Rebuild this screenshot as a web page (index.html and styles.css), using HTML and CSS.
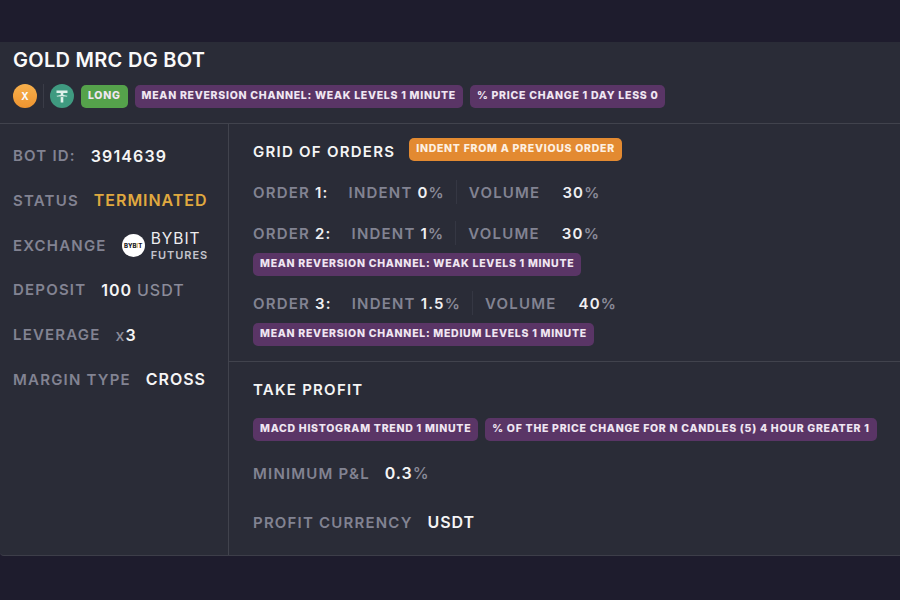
FILE: index.html
```html
<!DOCTYPE html>
<html lang="en">
  <head>
    <meta charset="UTF-8" />
    <meta name="viewport" content="width=device-width, initial-scale=1.0" />
    <title>Gold MRC DG Bot</title>
    <link rel="stylesheet" href="styles.css">
  </head>
  <body>
    <div class="card">
      <div class="card-head">
        <h1>GOLD MRC DG BOT</h1>
        <div class="tags">
          <span class="coin coin-x">X</span>
          <span class="sep"></span>
          <svg class="coin-svg" viewBox="0 0 24 24">
            <circle cx="12" cy="12" r="12" fill="#3f9a80" />
            <path d="M6.500 6.500h11v2.600h-4.200v1.800c2.500.2 4.200.6 4.200 1.100s-1.700.9-4.200 1.100V18.500h-2.600v-5.400c-2.500-.2-4.200-.6-4.200-1.100s1.700-.9 4.200-1.100V9.100H6.500z" fill="#dff0ea" />
            <path d="M7.500 11.800c.6.500 2.300.8 4.500.8s3.900-.3 4.500-.8" fill="none" stroke="#3f9a80" stroke-width=".7" />
          </svg>
          <span class="tag tag-green">LONG</span>
          <span class="tag">MEAN REVERSION CHANNEL: WEAK LEVELS 1 MINUTE</span>
          <span class="tag">% PRICE CHANGE 1 DAY LESS 0</span>
        </div>
      </div>

      <div class="card-body">
        <div class="side">
          <div class="side-row"><span class="lbl">BOT ID:</span><span class="val val-id">3914639</span></div>
          <div class="side-row"><span class="lbl">STATUS</span><span class="val val-status">TERMINATED</span></div>
          <div class="side-row">
            <span class="lbl">EXCHANGE</span>
            <span class="bybit">
              <span class="bybit-logo">BYB<i>I</i>T</span>
              <span class="bybit-name">BYBIT<small>FUTURES</small></span>
            </span>
          </div>
          <div class="side-row"><span class="lbl">DEPOSIT</span><span class="val">100 <em>USDT</em></span></div>
          <div class="side-row"><span class="lbl">LEVERAGE</span><span class="val"><em>x</em>3</span></div>
          <div class="side-row"><span class="lbl">MARGIN TYPE</span><span class="val">CROSS</span></div>
        </div>

        <div class="main">
          <div class="grid-orders">
            <div class="title-row">
              <h2>GRID OF ORDERS</h2>
              <span class="tag tag-orange">INDENT FROM A PREVIOUS ORDER</span>
            </div>

            <div class="order">
              <div class="order-line">
                <span class="lbl">ORDER <b>1:</b></span>
                <span class="lbl">INDENT <b>0</b><em>%</em></span>
                <span class="vsep"></span>
                <span class="lbl vol">VOLUME</span>
                <span class="lbl"><b>30</b><em>%</em></span>
              </div>
            </div>

            <div class="order">
              <div class="order-line">
                <span class="lbl">ORDER <b>2:</b></span>
                <span class="lbl">INDENT <b>1</b><em>%</em></span>
                <span class="vsep"></span>
                <span class="lbl vol">VOLUME</span>
                <span class="lbl"><b>30</b><em>%</em></span>
              </div>
              <div class="order-tags"><span class="tag">MEAN REVERSION CHANNEL: WEAK LEVELS 1 MINUTE</span></div>
            </div>

            <div class="order">
              <div class="order-line">
                <span class="lbl">ORDER <b>3:</b></span>
                <span class="lbl">INDENT <b>1.5</b><em>%</em></span>
                <span class="vsep"></span>
                <span class="lbl vol">VOLUME</span>
                <span class="lbl"><b>40</b><em>%</em></span>
              </div>
              <div class="order-tags"><span class="tag">MEAN REVERSION CHANNEL: MEDIUM LEVELS 1 MINUTE</span></div>
            </div>
          </div>

          <div class="take-profit">
            <h2>TAKE PROFIT</h2>
            <div class="tp-tags">
              <span class="tag">MACD HISTOGRAM TREND 1 MINUTE</span>
              <span class="tag">% OF THE PRICE CHANGE FOR N CANDLES (5) 4 HOUR GREATER 1</span>
            </div>
            <div class="tp-row"><span class="lbl">MINIMUM P&amp;L</span><span class="val">0.3<em>%</em></span></div>
            <div class="tp-row tp-last"><span class="lbl">PROFIT CURRENCY</span><span class="val">USDT</span></div>
          </div>
        </div>
      </div>
    </div>
  </body>
</html>
```

FILE: styles.css
```css
body {
  margin: 0;
  height: 600px;
  overflow: hidden;
  background-color: #1e1c2d;
  font-family: Inter, "Liberation Sans", sans-serif;
  color: #fafafa;
}

.card {
  margin-top: 42px;
  height: 513px;
  background-color: #2a2c37;
  border-bottom: 1px solid #3d3e49;
  border-radius: 0 0 0 4px;
  display: flex;
  flex-direction: column;
}

.card-head {
  height: 81px;
  padding-left: 13px;
  border-bottom: 1px solid #41434d;
}

h1 {
  margin: 0;
  padding-top: 6px;
  font-size: 20px;
  line-height: 24px;
  font-weight: 600;
  letter-spacing: 0.28px;
}

.tags {
  display: flex;
  align-items: center;
  margin-top: 12px;
  gap: 7px;
}

.tag {
  display: inline-block;
  height: 23px;
  line-height: 22px;
  padding: 0 7px;
  border-radius: 5px;
  background-color: #5a3566;
  color: #f0e6f2;
  font-size: 10.5px;
  font-weight: 800;
  letter-spacing: 0.72px;
  white-space: nowrap;
}

.tag-green {
  background-color: #55a24b;
}

.tag-orange {
  background-color: #e38a31;
  color: #fdf0e2;
}

.coin {
  width: 24px;
  height: 24px;
  border-radius: 50%;
  background: linear-gradient(#f7b04c, #ee9430);
  font-size: 10px;
  font-weight: 700;
  line-height: 24px;
  text-align: center;
}

.sep {
  width: 1px;
  height: 24px;
  background-color: #3a3c47;
  margin-left: -1px;
  margin-right: -1px;
}

.coin-svg {
  width: 24px;
  height: 24px;
}

.card-body {
  flex: 1;
  display: flex;
}

.side {
  width: 215px;
  padding: 19.5px 0 0 13px;
  border-right: 1px solid #41434d;
  flex-shrink: 0;
}

.side-row {
  display: flex;
  align-items: center;
  gap: 15px;
  height: 24px;
  margin-bottom: 20.8px;
}

.lbl {
  font-size: 15px;
  font-weight: 600;
  letter-spacing: 1.2px;
  color: #828392;
  white-space: nowrap;
}

.val {
  font-size: 16px;
  font-weight: 600;
  letter-spacing: 0.95px;
  color: #f5f5f5;
  white-space: nowrap;
}

.val-id {
  letter-spacing: 1.1px;
}

.val-status {
  color: #e0a93f;
}

.val em {
  font-style: normal;
  color: #8a8b99;
  font-weight: 500;
}

.bybit {
  display: flex;
  align-items: center;
  gap: 6px;
}

.bybit-logo {
  width: 23px;
  height: 23px;
  border-radius: 50%;
  background-color: #fff;
  color: #17181e;
  font-size: 6px;
  font-weight: 800;
  line-height: 23px;
  text-align: center;
}

.bybit-logo i {
  font-style: normal;
  color: #e6a33c;
}

.bybit-name {
  display: flex;
  flex-direction: column;
  padding-top: 1px;
  font-size: 15.5px;
  line-height: 18px;
  letter-spacing: 1px;
  font-weight: 400;
  color: #eeeef0;
}

.bybit-name small {
  margin-top: 1px;
  font-size: 11px;
  line-height: 13px;
  font-weight: 600;
  letter-spacing: 0.95px;
  color: #c4c4cc;
}

.main {
  flex: 1;
  min-width: 0;
}

h2 {
  margin: 0;
  font-size: 15px;
  font-weight: 600;
  letter-spacing: 1.25px;
  color: #f5f5f5;
}

.grid-orders {
  height: 223px;
  padding: 14px 0 0 24px;
  border-bottom: 1px solid #41434d;
}

.title-row {
  display: flex;
  align-items: center;
  gap: 14px;
  height: 24px;
  margin-bottom: 17px;
  padding-top: 1px;
}

.title-row .tag {
  margin-top: -4px;
}

.order {
  margin-bottom: 17px;
}

.order-line {
  display: flex;
  align-items: center;
  height: 24px;
}

.order-line .lbl {
  margin-right: 20px;
}

.order-line .lbl:nth-child(2) {
  margin-right: 11px;
}

.order-line b {
  color: #f0f0f2;
  font-weight: 600;
}

.order-line em {
  font-style: normal;
  color: #8a8b99;
}

.vsep {
  width: 1px;
  height: 24px;
  background-color: #353743;
  margin-right: 12px;
}

.order-line .vol {
  margin-right: 22px;
}

.order-tags {
  margin-top: 6px;
  margin-bottom: -2px;
}

.take-profit {
  padding: 18px 0 0 24px;
}

.tp-tags {
  display: flex;
  gap: 7px;
  margin-top: 19px;
}

.tp-row {
  display: flex;
  align-items: center;
  gap: 15px;
  height: 24px;
  margin-top: 20px;
}

.tp-last {
  margin-top: 25px;
}
```
